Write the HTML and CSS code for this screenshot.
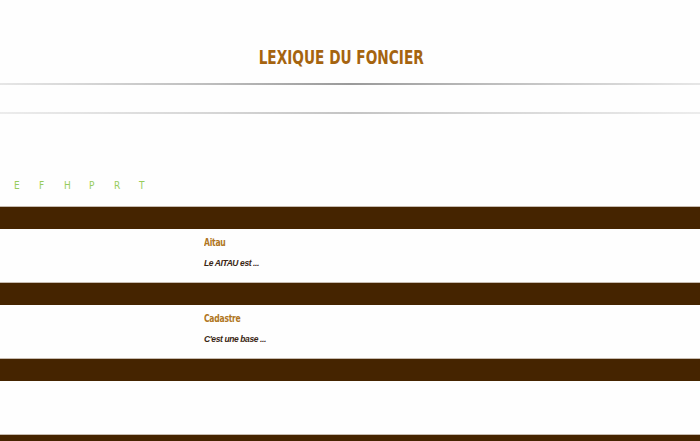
FILE: index.html
```html
<!DOCTYPE html>
<html lang="fr">
<head>
<meta charset="utf-8">
<title>Lexique du foncier</title>
<link rel="stylesheet" href="styles.css">
</head>
<body>
<header class="page-head">
  <h1 class="title">LEXIQUE DU FONCIER</h1>
</header>
<div class="rule rule-strong"></div>
<div class="rule rule-soft"></div>
<nav class="letters">
  <a>E</a><a>F</a><a>H</a><a>P</a><a>R</a><a>T</a>
</nav>
<section class="glossary">
  <article class="entry">
    <div class="entry-bar"></div>
    <div class="entry-body">
      <div class="entry-side"></div>
      <div class="entry-main">
        <h3 class="term">Aitau</h3>
        <p class="desc">Le AITAU est ...</p>
      </div>
    </div>
  </article>
  <article class="entry">
    <div class="entry-bar"></div>
    <div class="entry-body">
      <div class="entry-side"></div>
      <div class="entry-main">
        <h3 class="term">Cadastre</h3>
        <p class="desc">C'est une base ...</p>
      </div>
    </div>
  </article>
  <article class="entry">
    <div class="entry-bar"></div>
    <div class="entry-body">
      <div class="entry-side"></div>
      <div class="entry-main"></div>
    </div>
  </article>
  <article class="entry">
    <div class="entry-bar"></div>
  </article>
</section>
</body>
</html>
```
FILE: styles.css
```css
html, body {
  margin: 0;
  padding: 0;
  background: #fefefe;
  font-family: "DejaVu Sans Condensed", "Liberation Sans", sans-serif;
  overflow: hidden;
}

.page-head {
  height: 83px;
  display: flex;
  justify-content: center;
  padding-right: 18px;
}

.title {
  margin: 47px 0 0;
  font-size: 19px;
  line-height: 20px;
  font-weight: bold;
  color: #a5640f;
  transform: scaleX(0.8);
}

.rule {
  height: 2px;
}

.rule-strong {
  background: linear-gradient(to right, #e6e6e6 0%, #bdbdbd 30%, #9a9a9a 50%, #bdbdbd 70%, #e6e6e6 100%);
}

.rule-soft {
  margin-top: 27px;
  background: linear-gradient(to right, #ececec 0%, #d6d6d6 30%, #c4c4c4 50%, #d6d6d6 70%, #ececec 100%);
}

.letters {
  display: flex;
  gap: 17px;
  padding: 66px 0 0 14px;
  height: 26px;
  font-family: "DejaVu Sans Condensed", sans-serif;
  font-size: 10px;
  line-height: 12px;
}

.letters a {
  color: #97cc5a;
  width: 8px;
}

.entry-bar {
  height: 22px;
  background: #452400;
  border-top: 1px solid #c6bbb0;
}

.entry-body {
  height: 53px;
  display: grid;
  grid-template-columns: 204px 1fr;
}

.term {
  margin: 8px 0 0;
  font-size: 10px;
  line-height: 12px;
  font-weight: bold;
  color: #b07622;
  letter-spacing: -0.3px;
  transform: scaleX(0.85);
  transform-origin: left center;
}

.desc {
  margin: 9px 0 0;
  font-family: "Liberation Sans", sans-serif;
  font-size: 8.5px;
  line-height: 11px;
  font-style: italic;
  font-weight: bold;
  color: #3a2614;
  letter-spacing: -0.4px;
}
```
